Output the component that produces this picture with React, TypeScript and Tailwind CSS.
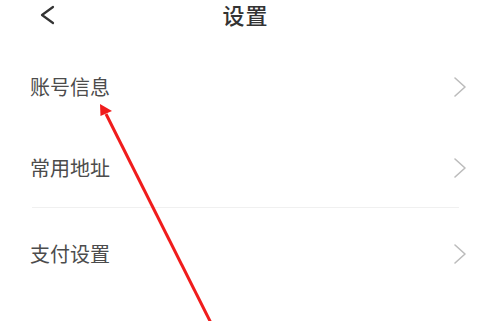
const font = { fontFamily: '"Noto Sans CJK SC", "Noto Sans", sans-serif' };

function ArrowRight() {
    return (
        <svg width="14" height="22" viewBox="0 0 14 22" className="text-[#bcbcbc]">
            <polyline points="2,2 12,11 2,20" fill="none" stroke="currentColor" strokeWidth="1.6" strokeLinecap="round" strokeLinejoin="round" />
        </svg>
    );
}

function Row({ label, className }: { label: string; className: string }) {
    return (
        <div className={`flex items-center justify-between pl-[30px] pr-[24px] ${className}`}>
            <span className="text-[20px] leading-none text-[#4c4c4c]">{label}</span>
            <ArrowRight />
        </div>
    );
}

export default function App() {
    return (
        <div className="relative w-[491px] h-[321px] overflow-hidden bg-white" style={font}>
            {/* Header */}
            <div className="relative flex items-center justify-center h-[28px]">
                <svg className="absolute left-[40px] top-[5px]" width="16" height="20" viewBox="0 0 16 20">
                    <polyline points="13,2 2,10 13,18" fill="none" stroke="#333" strokeWidth="2.2" strokeLinecap="round" strokeLinejoin="round" />
                </svg>
                <span className="text-[22px] leading-[28px] font-medium text-[#333] tracking-[1px]">设置</span>
            </div>

            {/* List */}
            <div className="mt-[18px] flex flex-col">
                <Row label="账号信息" className="h-[82px]" />
                <Row label="常用地址" className="h-[79px]" />
                <div className="mx-[32px] h-px bg-[#f0f0f0]" />
                <Row label="支付设置" className="h-[92px]" />
            </div>

            {/* Red annotation arrow */}
            <svg className="absolute inset-0 pointer-events-none" width="491" height="321" viewBox="0 0 491 321">
                <line x1="106" y1="114" x2="213" y2="327" stroke="#f01c1c" strokeWidth="3" />
                <polygon points="100,104 100.5,116 112,111" fill="#f01c1c" />
            </svg>
        </div>
    );
}
